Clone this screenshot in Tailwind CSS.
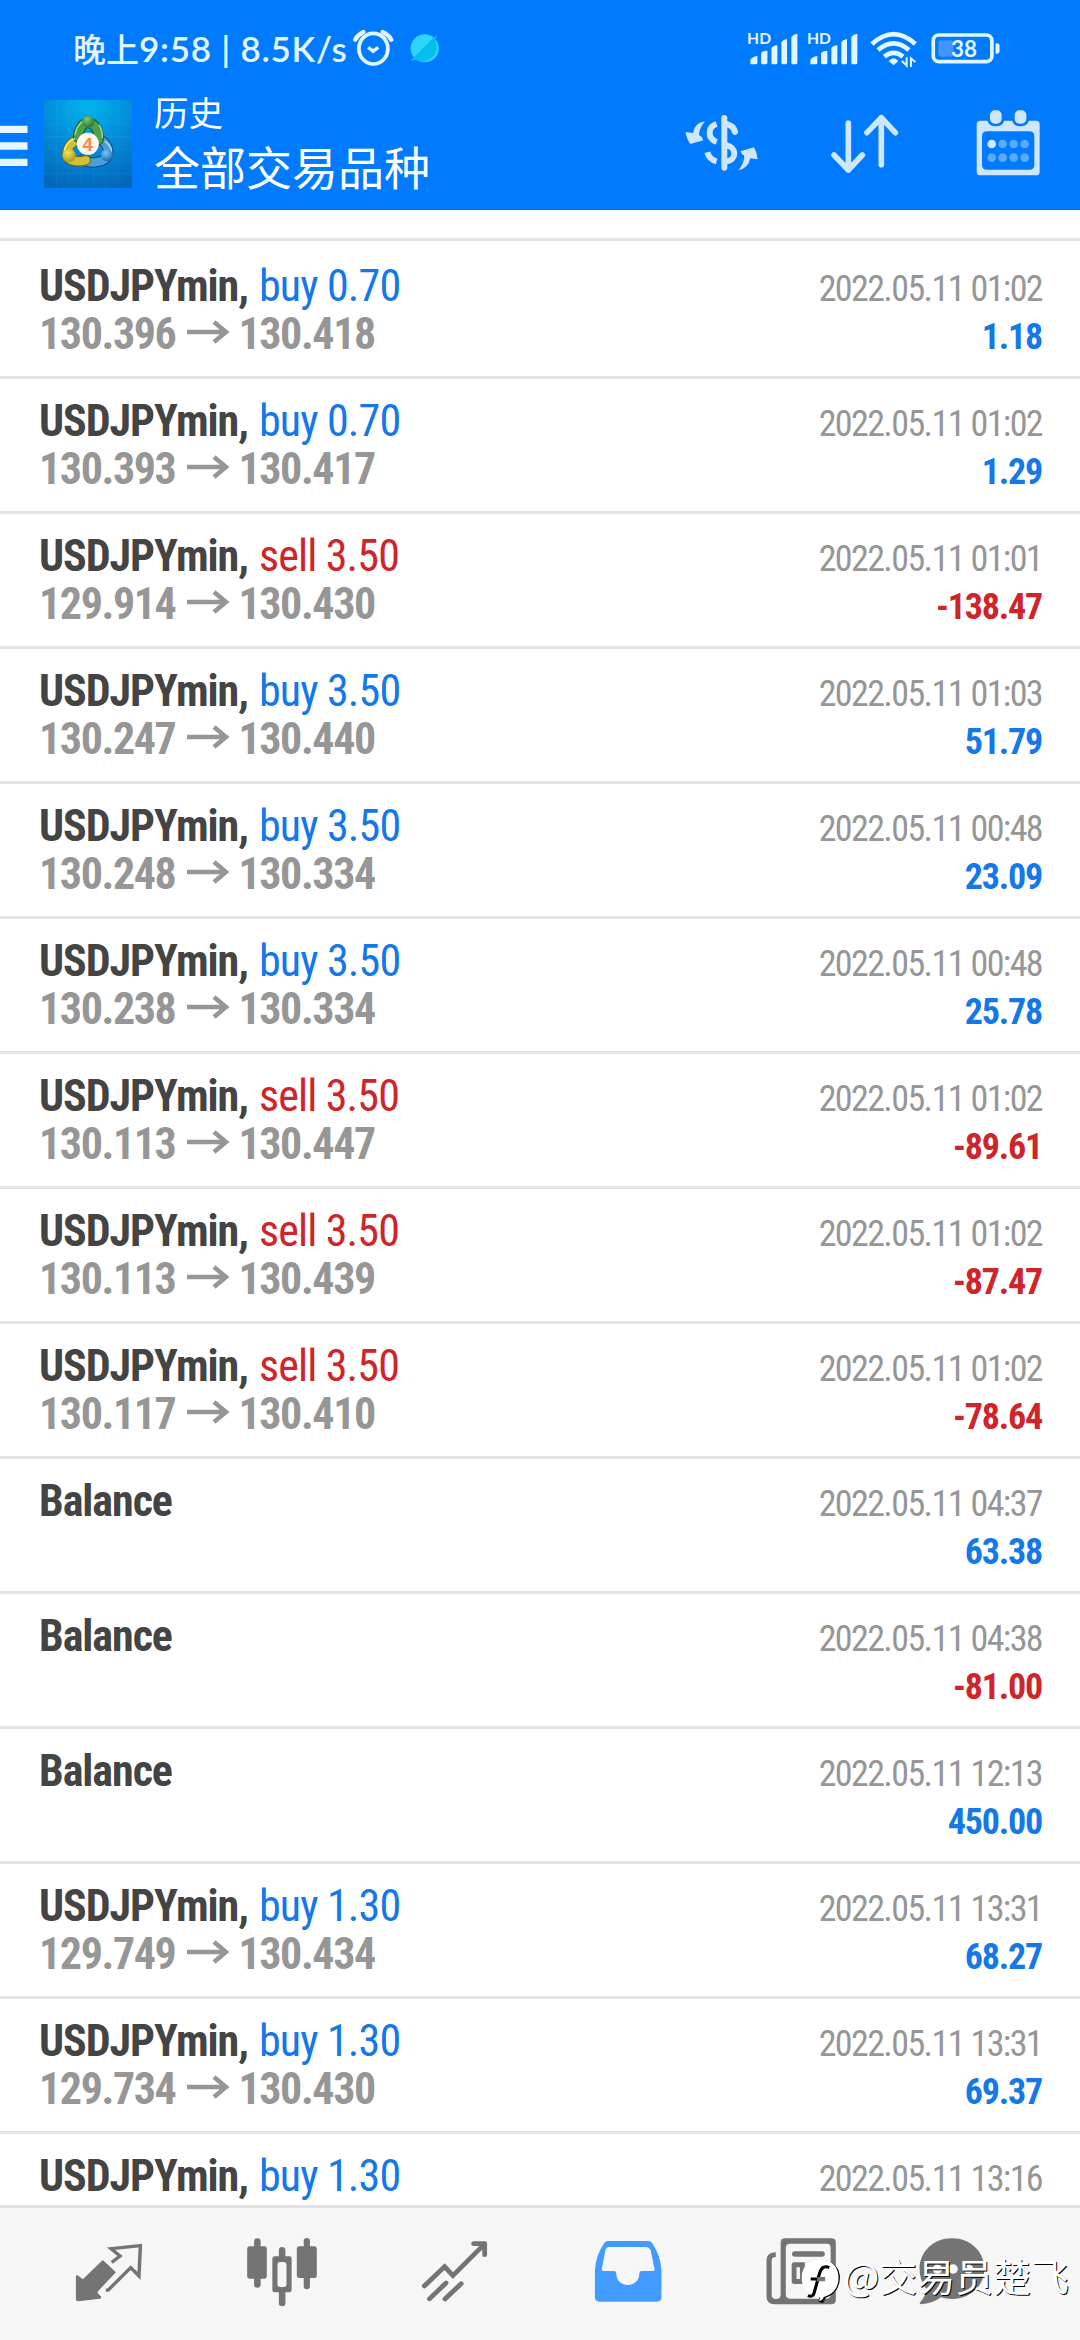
<!DOCTYPE html>
<html lang="zh-CN">
<head>
<meta charset="utf-8">
<title>历史</title>
<script src="https://cdn.jsdelivr.net/npm/@tailwindcss/browser@4"></script>
</head>
<body class="bg-white">
<div class="relative flex h-[2340px] w-[1080px] flex-col overflow-hidden bg-white font-['Roboto','Noto_Sans_CJK_SC',sans-serif]">
  <header class="h-[210px] shrink-0 border-b border-[#1268c8] bg-[#007aff]">
    <div class="flex h-[70px] items-start">
      <div class="ml-[73px] w-[278px] whitespace-nowrap pt-[24px] font-['Lato','Noto_Sans_CJK_SC',sans-serif] text-[35px] font-semibold leading-[48px] text-[#e2f6ff]"><span class="text-[33px] font-medium">晚上</span><span class="tracking-[0.75px]">9:58 | 8.5K/s</span></div>
      <svg class="mt-[26.7px] h-[41.7px] w-[93px]" viewBox="1020 80 270 125" preserveAspectRatio="none" fill="none">
        <ellipse cx="1085" cy="145" rx="42" ry="46" stroke="#e2f6ff" stroke-width="11"/>
        <path d="M1032 118Q1040 103 1056 95M1137 118Q1129 103 1112 95" stroke="#e2f6ff" stroke-width="13" stroke-linecap="round"/>
        <path d="M1070 141L1084 153L1099 141" stroke="#e2f6ff" stroke-width="10"/>
        <ellipse cx="1234" cy="144" rx="41" ry="42" fill="#2cd5fa"/>
        <path d="M1270 102L1265 122A41 42 0 0 1 1210 178L1192 182Z" fill="#06bdf0"/>
      </svg>
      <svg class="ml-auto mr-[73.4px] mt-[26.7px] h-[43.3px] w-[263.3px]" viewBox="250 80 790 130" fill="#e2f6ff">
        <g id="sig">
          <text x="262" y="132" font-family="Lato" font-weight="700" font-size="48" textLength="72" lengthAdjust="spacingAndGlyphs">HD</text>
          <path d="M272 192V178Q276 170 293 167V187Q293 192 288 192ZM304 158Q310 151 323 151V187Q323 192 318 192H309Q304 192 304 187ZM335 143Q340 135 353 135V187Q353 192 348 192H340Q335 192 335 187ZM365 125Q370 117 382 116V187Q382 192 377 192H370Q365 192 365 187ZM395 110Q401 101 413 100V187Q413 192 408 192H400Q395 192 395 187Z"/>
        </g>
        <use href="#sig" x="180"/>
        <g fill="none" stroke="#e2f6ff" stroke-width="14">
          <path d="M637 131Q702 72 767 131M655 149Q702 109 748 149M674 169Q702 146 730 169"/>
        </g>
        <path d="M687 182Q702 166 716 182L702 195Z"/>
        <path d="M741 171V196L727 182M754 200V174L767 185" fill="none" stroke="#e2f6ff" stroke-width="6"/>
        <rect x="821" y="104" width="176" height="80" rx="17" fill="none" stroke="#e2f6ff" stroke-width="11"/>
        <rect x="836" y="120" width="46" height="49" rx="8" fill="#3f97ff"/>
        <path d="M1008 129H1012Q1020 129 1020 137V152Q1020 160 1012 160H1008Z"/>
        <text x="874" y="169" font-family="Lato" font-weight="700" font-size="66" textLength="78" lengthAdjust="spacingAndGlyphs">38</text>
      </svg>
    </div>
    <div class="flex items-start">
      <svg class="mt-[55px] h-[42px] w-[28px]" viewBox="0 0 28 42" fill="#e8f6ff"><path d="M0 .7H27.5V8H0ZM0 17.3H27.5V24.7H0ZM0 33.7H27.5V41H0Z"/></svg>
      <svg class="ml-[16px] mt-[30px] size-[88px]" viewBox="43 30 263 263">
        <defs>
          <radialGradient id="bg" cx=".5" cy=".05" r="1"><stop offset="0" stop-color="#00b4ec"/><stop offset=".55" stop-color="#0488d6"/><stop offset="1" stop-color="#0366b8"/></radialGradient>
          <radialGradient id="gr" cx=".4" cy=".3" r=".7"><stop offset="0" stop-color="#7cc777"/><stop offset="1" stop-color="#207833"/></radialGradient>
          <radialGradient id="ye" cx=".4" cy=".3" r=".7"><stop offset="0" stop-color="#f2e65c"/><stop offset="1" stop-color="#a99a1c"/></radialGradient>
          <radialGradient id="bl" cx=".4" cy=".3" r=".7"><stop offset="0" stop-color="#7cc8f2"/><stop offset="1" stop-color="#1b6eb6"/></radialGradient>
        </defs>
        <rect x="43" y="30" width="263" height="263" fill="url(#bg)"/>
        <path d="M80 30V293M117 30V293M154 30V293M191 30V293M228 30V293M265 30V293M43 65H306M43 102H306M43 139H306M43 176H306M43 213H306M43 250H306" stroke="#5ad0ff" stroke-opacity=".14" stroke-width="2"/>
        <g stroke-linejoin="round" stroke-linecap="round" fill="none">
          <path d="M158 208C175 222 215 218 230 203C242 185 232 158 212 150" stroke="#0a4a83" stroke-width="31"/>
          <path d="M158 208C175 222 215 218 230 203C242 185 232 158 212 150" stroke="#4a9fd9" stroke-width="25"/>
          <path d="M168 210C145 216 118 214 113 197C110 172 125 155 146 149" stroke="#6f6a14" stroke-width="31"/>
          <path d="M168 210C145 216 118 214 113 197C110 172 125 155 146 149" stroke="#cfc136" stroke-width="25"/>
          <path d="M145 142C146 114 160 98 176 98C194 100 208 120 206 150" stroke="#155a28" stroke-width="31"/>
          <path d="M145 142C146 114 160 98 176 98C194 100 208 120 206 150" stroke="#4f9f49" stroke-width="25"/>
          <path d="M136 132C140 108 156 92 168 92M208 106C216 118 218 130 217 142" stroke="#a9dba0" stroke-width="4"/>
          <path d="M104 184C106 164 120 150 134 146" stroke="#f6f0a0" stroke-width="4"/>
          <path d="M226 154C240 164 246 178 244 186" stroke="#b5dff7" stroke-width="4"/>
        </g>
        <circle cx="175" cy="95" r="18" fill="url(#gr)"/>
        <circle cx="118" cy="196" r="20" fill="url(#ye)"/>
        <circle cx="231" cy="195" r="18" fill="url(#bl)"/>
        <circle cx="174" cy="161" r="33" fill="#fbf7f3"/>
        <text x="174" y="181" text-anchor="middle" font-family="Liberation Sans" font-weight="700" font-size="56" fill="#f08a45">4</text>
      </svg>
      <div class="ml-[22px] font-['Noto_Sans_CJK_SC',sans-serif] text-white">
        <div class="mt-[17px] text-[34.5px] leading-[48px]">历史</div>
        <div class="-mt-[2px] text-[46px] leading-[64px]">全部交易品种</div>
      </div>
      <div class="ml-auto mr-[36.7px] mt-[36.7px] flex items-start">
        <svg class="h-[73.3px] w-[78.3px]" viewBox="70 320 235 220" fill="#cfe6ff">
          <path d="M136 363Q105 368 100 398L78 395Q80 415 92 431L131 420Q126 407 118 404Q119 383 136 363Z"/>
          <path d="M236 510Q266 505 272 474L294 477Q292 456 283 441L242 453Q246 463 254 466Q254 488 236 510Z"/>
          <g fill="none" stroke="#cfe6ff" stroke-width="18">
            <path d="M171 371C143 380 143 415 171 425"/><path d="M143 456C147 472 158 480 171 483"/>
            <path d="M194 353V502" stroke-linecap="round"/>
            <path d="M200 371Q222 376 226 395" stroke-linecap="round"/>
            <path d="M200 435C232 440 232 480 200 484"/>
          </g>
        </svg>
        <svg class="ml-[66.7px] h-[73.3px] w-[73.3px]" viewBox="505 320 220 220" fill="none" stroke="#cfe6ff" stroke-width="17" stroke-linecap="round" stroke-linejoin="round">
          <path d="M566 368V509M523 464L566 509L608 464M665 493V352M622 397L665 352L707 397"/>
        </svg>
        <svg class="ml-[71.6px] h-[73.3px] w-[70px]" viewBox="940 320 210 220">
          <path fill-rule="evenodd" fill="#cfe6ff" d="M962 361H1129Q1140 361 1140 372V514Q1140 525 1129 525H962Q951 525 951 514V372Q951 361 962 361ZM982 393Q967 393 967 408V493Q967 508 982 508H1109Q1124 508 1124 493V408Q1124 393 1109 393Z"/>
          <rect x="987" y="326" width="43" height="48" rx="18" fill="#cfe6ff" stroke="#007aff" stroke-width="8"/>
          <rect x="1061" y="326" width="43" height="48" rx="18" fill="#cfe6ff" stroke="#007aff" stroke-width="8"/>
          <circle cx="996" cy="431" r="13" fill="#cfeaff"/>
          <g fill="#5aaaff"><circle cx="1029" cy="431" r="13"/><circle cx="1062" cy="431" r="13"/><circle cx="1095" cy="431" r="13"/><circle cx="996" cy="472" r="13"/><circle cx="1029" cy="472" r="13"/><circle cx="1062" cy="472" r="13"/><circle cx="1095" cy="472" r="13"/></g>
        </svg>
      </div>
    </div>
  </header>
  <div class="h-[31px] shrink-0 border-b-[3px] border-[#e4e4e4]"></div>
  <main id="list" class="h-[1964px] shrink-0 overflow-hidden pt-[3px] font-stretch-condensed"></main>
  <nav class="flex h-[135px] shrink-0 border-t-[3px] border-[#e2e2e2] bg-[#f6f6f6] pl-[22px] pt-[28.7px] text-[#747474]">
    <div class="flex w-[173px] justify-center">
      <svg class="h-[73.3px] w-[80px]" viewBox="199 140 232 220" preserveAspectRatio="none" fill="currentColor">
        <path d="M297 209L335 246L282 304V308L293 320L290 325L226 333Q219 333 219 326V256L223 254L239 267Z"/>
        <path d="M323 216L347 197L321 175L406 166L402 257L378 232L313 299L306 300" fill="none" stroke="currentColor" stroke-width="10"/>
      </svg>
    </div>
    <div class="flex w-[173px] justify-center">
      <svg class="h-[73.3px] w-[80px]" viewBox="700 140 232 220" preserveAspectRatio="none" fill="currentColor">
        <rect x="715" y="168" width="57" height="97" rx="7"/><rect x="735" y="144" width="19" height="148" rx="9"/>
        <rect x="859" y="168" width="58" height="95" rx="7"/><rect x="879" y="143" width="18" height="154" rx="9"/>
        <path fill-rule="evenodd" d="M807 198V180Q807 170 816 170T826 180V198H838Q844 198 844 205V299Q844 306 838 306H826V339Q826 348 816 348T807 339V306H795Q788 306 788 299V205Q788 198 795 198ZM811 215Q803 215 803 223V282Q803 290 811 290H821Q829 290 829 282V223Q829 215 821 215Z"/>
      </svg>
    </div>
    <div class="flex w-[173px] justify-center">
      <svg class="h-[73.3px] w-[80px]" viewBox="1203 140 232 220" preserveAspectRatio="none" fill="none" stroke="currentColor" stroke-width="14">
        <path d="M1230 287L1289 229L1313 256L1405 161" stroke-linecap="round"/>
        <path d="M1373 160H1405V193" stroke-linecap="round" stroke-linejoin="round"/>
        <path d="M1245 326L1293 278M1290 326L1337 280" stroke-linecap="round"/>
      </svg>
    </div>
    <div class="flex w-[173px] justify-center">
      <svg class="h-[73.3px] w-[80px]" viewBox="138 140 232 220" preserveAspectRatio="none" fill="#429bff">
        <path fill-rule="evenodd" d="M196 152H313Q320 152 324 158Q349 197 351 240V320Q351 334 337 334H172Q158 334 158 320V240Q160 197 185 158Q189 152 196 152ZM199 170Q192 170 189 177L178 236Q177 242 183 242H213Q220 242 220 249C220 296 287 296 287 249Q287 242 294 242H326Q333 242 331 236L320 181Q317 170 304 170Z"/>
      </svg>
    </div>
    <div class="flex w-[173px] justify-center">
      <svg class="h-[73.3px] w-[80px]" viewBox="641 140 232 220" preserveAspectRatio="none" fill="currentColor">
        <path fill-rule="evenodd" d="M711 144H845Q858 144 858 157V328Q858 342 844 342H680Q657 342 657 318V207Q659 186 684 186V200Q672 200 672 209V314Q672 326 684 326Q698 326 698 314V157Q698 144 711 144ZM725 160Q713 160 713 172V312Q713 325 725 325H832Q843 325 843 312V172Q843 160 832 160Z"/>
        <rect x="731" y="183" width="95" height="16" rx="8"/>
        <path fill-rule="evenodd" d="M738 216H768V281H738Q730 281 730 273V224Q730 216 738 216ZM744 231V266H754V231Z"/>
        <rect x="780" y="216" width="46" height="15" rx="7"/><rect x="780" y="241" width="46" height="15" rx="7"/><rect x="780" y="266" width="46" height="15" rx="7"/>
      </svg>
    </div>
    <div class="flex w-[132px] justify-center">
      <svg class="h-[73.3px] w-[80px]" viewBox="1084 140 232 220" preserveAspectRatio="none" fill="currentColor">
        <path d="M1197 144C1250 144 1291 184 1291 235S1250 326 1197 326Q1180 326 1165 321Q1140 340 1107 342Q1100 341 1106 334Q1122 316 1124 297Q1103 272 1103 235C1103 184 1144 144 1197 144Z"/>
        <g fill="#f6f6f6"><circle cx="1155" cy="236" r="14"/><circle cx="1200" cy="236" r="14"/><circle cx="1245" cy="236" r="14"/></g>
      </svg>
    </div>
  </nav>
  <div class="absolute left-[800px] top-[2248px] flex items-start text-white">
    <svg class="mt-[9px] h-[48px] w-[42px]" viewBox="755 204 122 144" preserveAspectRatio="none">
      <path d="M822 214Q871 222 871 268Q869 312 830 326L822 342L808 338L812 324L820 320Z" fill="#000"/>
      <path d="M814 212C848 212 867 234 867 266C867 298 850 316 824 324Q822 332 810 337Q814 328 812 321C780 320 760 298 760 266C760 234 780 212 814 212Z" fill="#fff"/>
      <path d="M840 236Q820 226 812 252L796 312Q792 326 778 320M786 270H820" fill="none" stroke="#000" stroke-width="9"/>
      <path d="M806 264H828V277H803Z" fill="#747474"/>
    </svg>
    <span class="ml-[1.5px] whitespace-nowrap font-['Noto_Sans_CJK_SC',sans-serif] text-[37.9px] leading-[54px] [text-shadow:1px_1px_0_#000]">@交易员楚飞</span>
  </div>
</div>
<script>
const U='USDJPYmin';
const rows=[
 [U,'buy 0.70','130.396','130.418','2022.05.11 01:02','1.18'],
 [U,'buy 0.70','130.393','130.417','2022.05.11 01:02','1.29'],
 [U,'sell 3.50','129.914','130.430','2022.05.11 01:01','-138.47'],
 [U,'buy 3.50','130.247','130.440','2022.05.11 01:03','51.79'],
 [U,'buy 3.50','130.248','130.334','2022.05.11 00:48','23.09'],
 [U,'buy 3.50','130.238','130.334','2022.05.11 00:48','25.78'],
 [U,'sell 3.50','130.113','130.447','2022.05.11 01:02','-89.61'],
 [U,'sell 3.50','130.113','130.439','2022.05.11 01:02','-87.47'],
 [U,'sell 3.50','130.117','130.410','2022.05.11 01:02','-78.64'],
 ['Balance','','','','2022.05.11 04:37','63.38'],
 ['Balance','','','','2022.05.11 04:38','-81.00'],
 ['Balance','','','','2022.05.11 12:13','450.00'],
 [U,'buy 1.30','129.749','130.434','2022.05.11 13:31','68.27'],
 [U,'buy 1.30','129.734','130.430','2022.05.11 13:31','69.37'],
 [U,'buy 1.30','','','2022.05.11 13:16','']
];
document.getElementById('list').innerHTML=rows.map(([n,s,a,b,d,v])=>`
 <div class="h-[135px] border-b-[3px] border-[#e4e4e4] pt-[18px] pl-[39px] pr-[38px]">
  <div class="flex h-[48px] items-baseline justify-between whitespace-nowrap leading-[48px]">
   <div class="flex items-baseline text-[44px]"><span class="font-bold tracking-[-1.05px] text-[#444444]">${n}${s?',':''}</span><span class="ml-[11px] tracking-[-0.85px] ${s[0]==='s'?'text-[#cf2429]':'text-[#1478e8]'}">${s}</span></div>
   <span class="text-[36px] tracking-[-1.6px] text-[#969696]">${d}</span>
  </div>
  <div class="flex h-[48px] items-baseline justify-between whitespace-nowrap leading-[48px]">
   <div class="flex items-baseline text-[44px] font-bold tracking-[-1.4px] text-[#969696]">${a?`<span>${a}</span><svg class="ml-[12px] mr-[8px] h-[24px] w-[43px] -translate-y-[5px]" viewBox="0 0 43 24" fill="none" stroke="currentColor" stroke-width="4.5"><path d="M0 12H40M27 2L39 12L27 22"/></svg><span>${b}</span>`:'<span>&nbsp;</span>'}</div>
   <span class="text-[36px] font-bold tracking-[-1.2px] ${v[0]==='-'?'text-[#cf2429]':'text-[#1478e8]'}">${v}</span>
  </div>
 </div>`).join('');
</script>
</body>
</html>
